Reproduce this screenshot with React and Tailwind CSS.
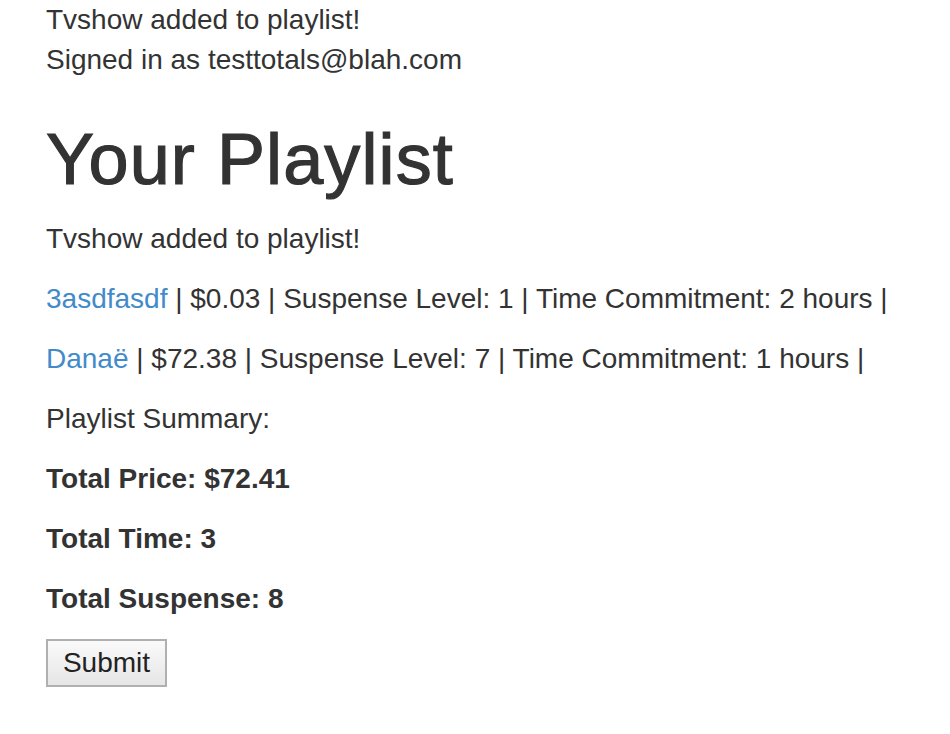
export default function App() {
  const shows = [
    { id: 1, name: "3asdfasdf", price: "$0.03", suspense: 1, time: 2 },
    { id: 2, name: "Danaë", price: "$72.38", suspense: 7, time: 1 },
  ];

  return (
    <div className="min-h-screen bg-white pl-[46px] text-[28px] leading-[40px] text-[#333] font-['Liberation_Sans',Arial,sans-serif]">
      <div>Tvshow added to playlist!</div>
      <div>Signed in as testtotals@blah.com</div>

      <h1 className="mt-[40px] mb-[20px] text-[72px] leading-[79px] font-normal tracking-[1.1px] [-webkit-text-stroke:1.2px_#333]">
        Your Playlist
      </h1>

      <p className="mb-[20px]">Tvshow added to playlist!</p>

      {shows.map((show) => (
        <p className="mb-[20px]" key={show.id}>
          <a className="text-[#428bca] hover:underline" href="#">
            {show.name}
          </a>{" "}
          | {show.price} | Suspense Level: {show.suspense} | Time Commitment:{" "}
          {show.time} hours |
        </p>
      ))}

      <p className="mb-[20px]">Playlist Summary:</p>
      <p className="mb-[20px] font-bold">Total Price: $72.41</p>
      <p className="mb-[20px] font-bold">Total Time: 3</p>
      <p className="mb-[20px] font-bold">Total Suspense: 8</p>

      <button
        className="h-[48px] w-[121px] border-2 border-[#b0b0b0] bg-gradient-to-b from-[#fafafa] to-[#e6e6e6] text-[28px] leading-none text-[#222]"
        type="button"
      >
        Submit
      </button>
    </div>
  );
}
